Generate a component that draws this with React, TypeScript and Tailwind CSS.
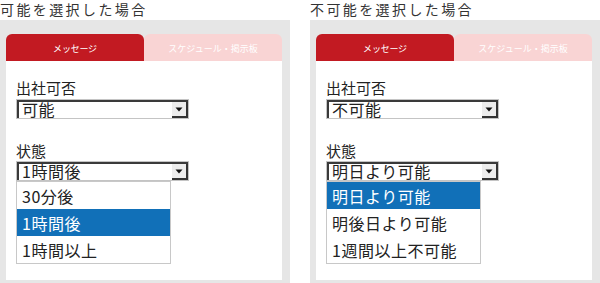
import React from "react";

function Arrow() {
  return (
    <svg width="8" height="5" viewBox="0 0 8 5">
      <path d="M0.5 0.5 L7.5 0.5 L4 4.5 Z" fill="#111" />
    </svg>
  );
}

function Select({ value }: { value: string }) {
  return (
    <div className="w-[173px] h-[20px] border border-[#c4c4c4] flex">
      <div className="flex-1 flex border-t-2 border-l-2 border-[#3a3a3a] bg-white">
        <div className="flex-1 pl-[3px] text-[16px] leading-[14px] tracking-[0.5px] text-[#222] whitespace-nowrap overflow-visible">
          {value}
        </div>
        <div className="w-[16px] bg-[#ededed] border-r-2 border-b-2 border-[#333] flex items-center justify-center">
          <Arrow />
        </div>
      </div>
    </div>
  );
}

function Panel({
  title,
  v1,
  v2,
  items,
  hi,
}: {
  title: string;
  v1: string;
  v2: string;
  items: string[];
  hi: number;
}) {
  return (
    <div className="w-[290px] h-[283px] flex flex-col">
      <div className="h-[20px] text-[14px] leading-[18px] tracking-[2.4px] text-[#333] whitespace-nowrap">
        {title}
      </div>
      <div className="flex-1 bg-[#e6e6e6] pt-[14px] pl-[6px] pr-[8px] pb-[3px] flex flex-col">
        <div className="flex h-[27px]">
          <div className="flex-1 bg-[#c21a22] rounded-t-[6px] text-white text-[9px] tracking-[-0.2px] flex items-center justify-center pt-[3px]">
            メッセージ
          </div>
          <div className="flex-1 bg-[#f9d4d4] rounded-t-[6px] text-white text-[9px] flex items-center justify-center pt-[3px]">
            スケジュール・掲示板
          </div>
        </div>
        <div className="flex-1 bg-white pl-[10px] pt-[18px] flex flex-col">
          <div className="h-[20px] text-[15px] leading-[17px] text-[#222]">出社可否</div>
          <Select value={v1} />
          <div className="h-[23px]" />
          <div className="h-[19px] text-[15px] leading-[17px] text-[#222]">状態</div>
          <Select value={v2} />
          <div className="w-[155px] border border-[#c8c8c8] bg-white flex flex-col">
            {items.map((it, i) => (
              <div
                key={i}
                className={
                  i === hi
                    ? "h-[27px] pl-[5px] flex items-center text-[16px] tracking-[0.5px] bg-[#1170b8] text-white whitespace-nowrap"
                    : "h-[27px] pl-[5px] flex items-center text-[16px] tracking-[0.5px] text-[#222] whitespace-nowrap"
                }
              >
                {it}
              </div>
            ))}
          </div>
        </div>
      </div>
    </div>
  );
}

export default function App() {
  return (
    <div className="w-[600px] h-[283px] bg-white flex gap-[20px] overflow-hidden font-['Noto_Sans_CJK_JP',sans-serif]">
      <Panel
        title="可能を選択した場合"
        v1="可能"
        v2="1時間後"
        items={["30分後", "1時間後", "1時間以上"]}
        hi={1}
      />
      <Panel
        title="不可能を選択した場合"
        v1="不可能"
        v2="明日より可能"
        items={["明日より可能", "明後日より可能", "1週間以上不可能"]}
        hi={0}
      />
    </div>
  );
}
